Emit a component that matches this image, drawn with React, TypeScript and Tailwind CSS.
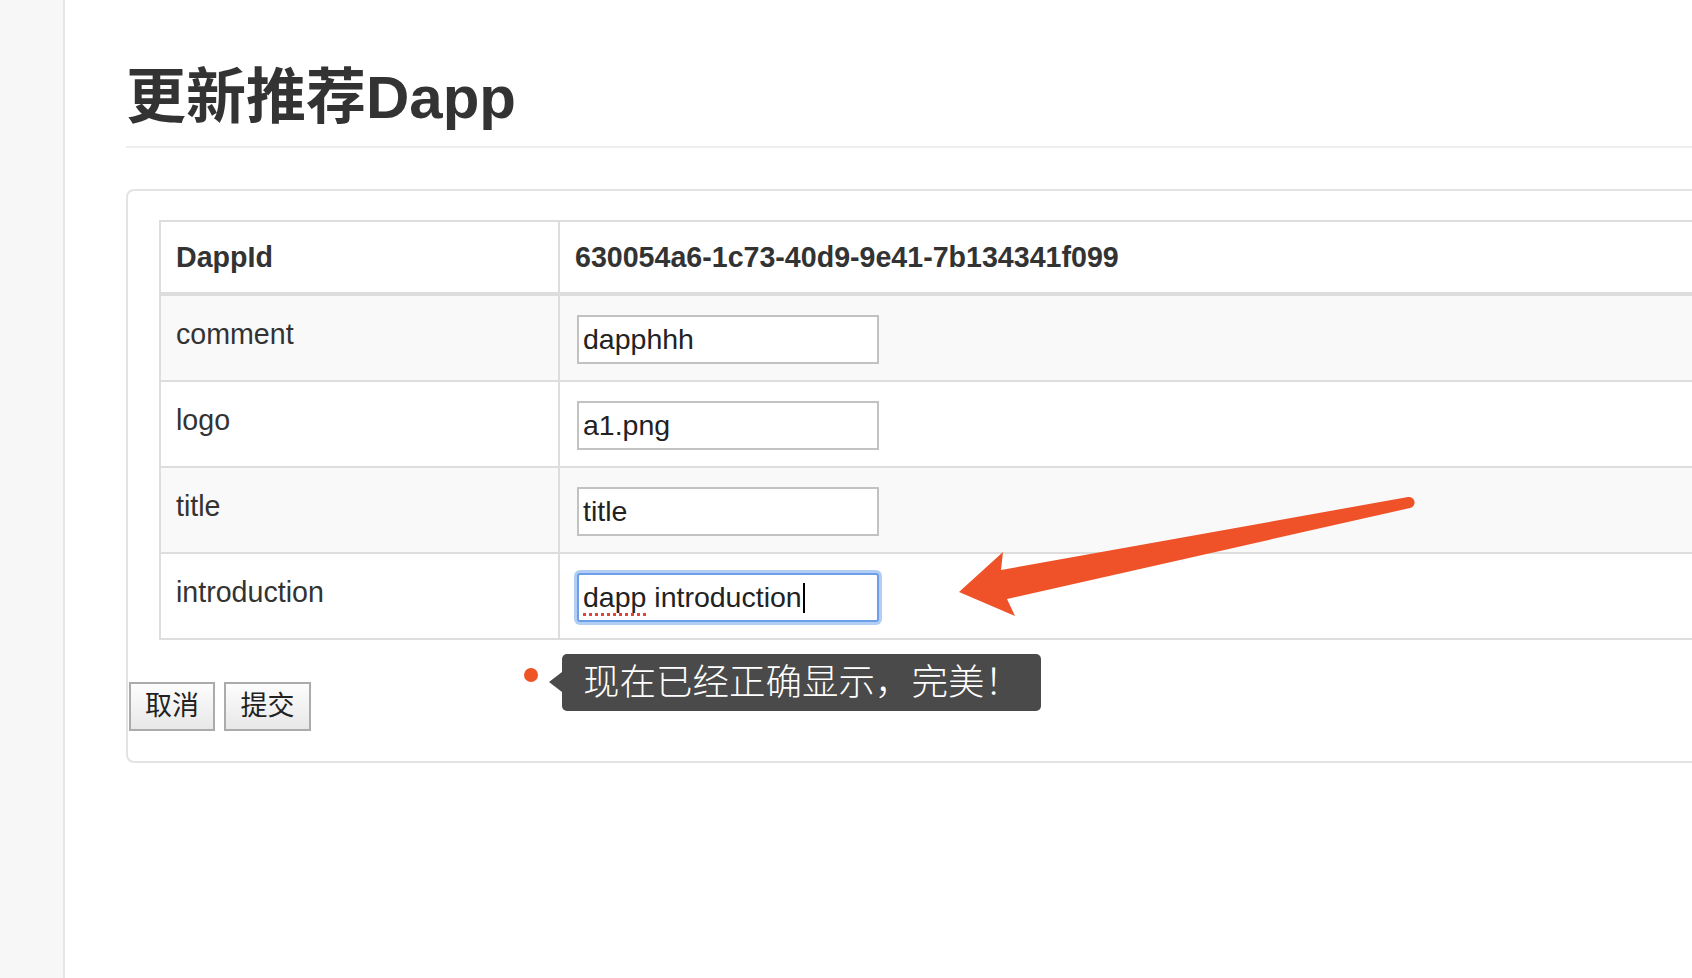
import React from "react";

const rows = [
  { label: "comment", value: "dapphhh", striped: true },
  { label: "logo", value: "a1.png", striped: false },
  { label: "title", value: "title", striped: true },
];

const App = () => {
  return (
    <div className="relative flex min-h-screen overflow-hidden bg-white font-[family-name:Liberation_Sans,Noto_Sans_CJK_SC,sans-serif] text-[#333]">
      {/* Sidebar */}
      <aside className="w-[65px] shrink-0 border-r-2 border-[#e6e6e6] bg-[#f7f7f7]" />

      <main className="flex-1 pl-[61px]">
        <h1 className="mt-[65px] border-b-2 border-[#eee] pb-[15px] text-[60px] font-bold leading-[66px]">
          更新推荐Dapp
        </h1>

        {/* Card */}
        <div className="mt-[41px] w-[1650px] rounded-lg border-2 border-[#e3e3e3] pt-[29px] pb-[30px]">
          <div className="ml-[31px] border-l-2 border-t-2 border-[#ddd] text-[28.6px]">
            <div className="flex h-[74px] border-b-4 border-[#ddd] font-bold">
              <div className="flex w-[399px] items-center border-r-2 border-[#ddd] px-[15px]">DappId</div>
              <div className="flex items-center px-[15px]">630054a6-1c73-40d9-9e41-7b134341f099</div>
            </div>

            {rows.map((row) => (
              <div
                key={row.label}
                className={`flex h-[86px] border-b-2 border-[#ddd] ${row.striped ? "bg-[#f9f9f9]" : "bg-white"}`}
              >
                <div className="w-[399px] border-r-2 border-[#ddd] px-[15px] pt-[18px] leading-[40px]">{row.label}</div>
                <div className="pl-[17px] pt-[19px]">
                  <input
                    readOnly
                    defaultValue={row.value}
                    className="h-[49px] w-[302px] border-2 border-[#c2c2c2] bg-white px-[4px] text-[28.5px] text-[#222] outline-none"
                  />
                </div>
              </div>
            ))}

            <div className="flex h-[86px] border-b-2 border-[#ddd] bg-white">
              <div className="w-[399px] border-r-2 border-[#ddd] px-[15px] pt-[18px] leading-[40px]">introduction</div>
              <div className="pl-[17px] pt-[19px]">
                <div className="flex h-[49px] w-[302px] items-center rounded-[3px] border-2 border-[#6d9eea] bg-white px-[4px] text-[28.5px] text-[#222] shadow-[0_0_0_3px_#b3cef5]">
                  <span className="underline decoration-[#e0453a] decoration-dotted decoration-[3px] underline-offset-[6px]">dapp</span>
                  <span className="whitespace-pre"> introduction</span>
                  <span className="ml-[1px] inline-block h-[30px] w-[2px] bg-black" />
                </div>
              </div>
            </div>
          </div>

          {/* Buttons */}
          <div className="ml-px mt-[42px] flex gap-[9px]">
            <button className="h-[49px] w-[86px] border-2 border-[#ababab] bg-linear-to-b from-[#fdfdfd] to-[#e8e8e8] text-[27px] text-[#222]">
              取消
            </button>
            <button className="h-[49px] w-[87px] border-2 border-[#ababab] bg-linear-to-b from-[#fdfdfd] to-[#e8e8e8] text-[27px] text-[#222]">
              提交
            </button>
          </div>
        </div>
      </main>

      {/* Annotation: dot + tooltip */}
      <div className="absolute left-[524px] top-[668px] h-[14px] w-[14px] rounded-full bg-[#ef5427]" />
      <div className="absolute left-[562px] top-[654px] h-[57px] w-[479px] rounded-[5px] bg-[#4a4a4a] pl-[21px] text-[36.5px] font-light leading-[57px] text-white">
        <span className="absolute left-[-13px] top-[18px] h-0 w-0 border-y-[10px] border-r-[13px] border-y-transparent border-r-[#4a4a4a]" />
        现在已经正确显示，完美！
      </div>

      {/* Annotation: arrow */}
      <svg className="pointer-events-none absolute left-0 top-0" width="1692" height="978" viewBox="0 0 1692 978">
        <path
          d="M959 592 L1003 552 L1001 570 L1408 497 A5.5 5.5 0 0 1 1410 508 L1007 599 L1015 616 Z"
          fill="#ef5228"
        />
      </svg>
    </div>
  );
};

export default App;
